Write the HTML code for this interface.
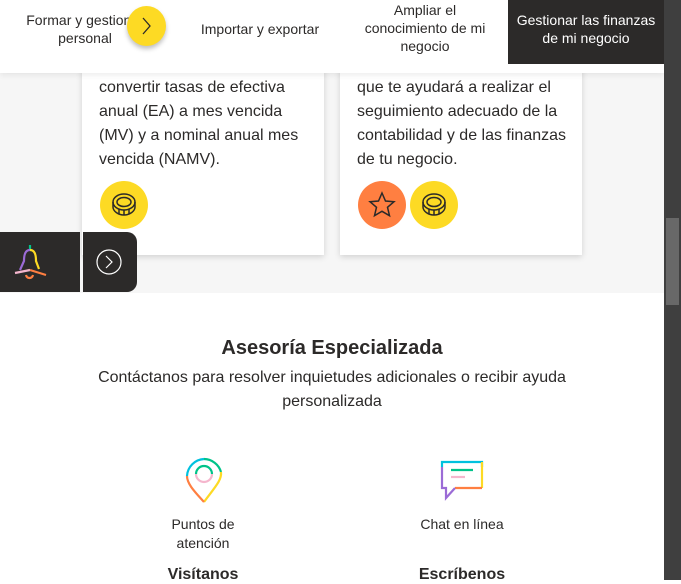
<!DOCTYPE html>
<html><head><meta charset="utf-8"><style>
*{margin:0;padding:0;box-sizing:border-box}
body{width:681px;height:580px;overflow:hidden;background:#fff;font-family:"Liberation Sans",sans-serif;color:#2c2a29;position:relative}
.gray{position:absolute;left:0;top:0;width:664px;height:293px;background:#f6f6f6}
.card{position:absolute;top:40px;width:242px;height:215px;background:#fff;box-shadow:0 2px 6px rgba(0,0,0,.15)}
.card p{position:absolute;left:17px;top:36px;font-size:16px;line-height:24px;width:215px}
.circ{position:absolute;width:48px;height:48px;border-radius:50%;top:141px;display:flex;align-items:center;justify-content:center}
.nav{position:absolute;left:0;top:0;width:664px;height:73px;background:#fff;box-shadow:0 2px 6px rgba(0,0,0,.08)}
.nav div{position:absolute;font-size:14px;line-height:18px;text-align:center}
.dark{position:absolute;left:508px;top:0;width:156px;height:64px;background:#2c2a29;color:#fff;font-size:14px;line-height:18px;text-align:center;padding-top:11px}
.sb{position:absolute;left:664px;top:0;width:17px;height:580px;background:#3f3f3f}
.th{position:absolute;left:666px;top:218px;width:13px;height:87px;background:#686868}
.t{position:absolute;width:664px;text-align:center}
</style></head><body>
<div class="gray"></div>
<div class="card" style="left:82px"><p>convertir tasas de efectiva anual (EA) a mes vencida (MV) y a nominal anual mes vencida (NAMV).</p>
<div class="circ" style="left:18px;background:#fdda24"><svg width="30" height="30" viewBox="0 0 30 30" fill="none" stroke="#2c2a29" stroke-width="1.5"><ellipse cx="15" cy="12" rx="11" ry="8"/><ellipse cx="15" cy="12" rx="7" ry="4.5"/><path d="M4 12v5c0 4 5 8 11 8s11-4 11-8v-5M10 19v5M15 20v5M20 19v5"/></svg></div></div>
<div class="card" style="left:340px"><p>que te ayudará a realizar el seguimiento adecuado de la contabilidad y de las finanzas de tu negocio.</p>
<div class="circ" style="left:18px;background:#ff7f41"><svg width="30" height="30" viewBox="0 0 30 30" fill="none" stroke="#2c2a29" stroke-width="1.5"><path d="M15 3l3.5 8 8.5.7-6.5 5.6 2 8.4L15 21.3 7.5 25.7l2-8.4L3 11.7l8.5-.7z"/></svg></div>
<div class="circ" style="left:70px;background:#fdda24"><svg width="30" height="30" viewBox="0 0 30 30" fill="none" stroke="#2c2a29" stroke-width="1.5"><ellipse cx="15" cy="12" rx="11" ry="8"/><ellipse cx="15" cy="12" rx="7" ry="4.5"/><path d="M4 12v5c0 4 5 8 11 8s11-4 11-8v-5M10 19v5M15 20v5M20 19v5"/></svg></div></div>
<div class="nav">
<div style="left:20px;top:11px;width:130px">Formar y gestionar<br>personal</div>
<div style="left:127px;top:6px;width:39px;height:40px;border-radius:50%;background:#fdda24;box-shadow:0 3px 5px rgba(0,0,0,.25)"><svg width="39" height="40"><path d="M16 12l7 8-7 8" stroke="#2c2a29" stroke-width="1.3" fill="none"/></svg></div>
<div style="left:190px;top:20px;width:140px">Importar y exportar</div>
<div style="left:350px;top:1px;width:150px">Ampliar el<br>conocimiento de mi<br>negocio</div>
</div>
<div class="dark">Gestionar las finanzas<br>de mi negocio</div>
<div style="position:absolute;left:0;top:232px;width:80px;height:60px;background:#2c2a29"><svg width="80" height="60" fill="none" stroke-width="2.2"><path d="M30 13v5" stroke="#00c389"/><path d="M30 18c-5 0-6 5-6 11l-4 9" stroke="#9b6bd6"/><path d="M30 18c5 0 6 5 6 11l3 8" stroke="#fdda24"/><path d="M15 41l15-3" stroke="#f5b6cd"/><path d="M30 38l16 5" stroke="#ff7f41"/><path d="M26 43c1 4 6 4 7 0" stroke="#ff7f41"/></svg></div>
<div style="position:absolute;left:83px;top:232px;width:54px;height:60px;background:#2c2a29;border-radius:0 10px 10px 0"><svg width="54" height="60"><circle cx="26" cy="30" r="12" stroke="#fff" stroke-width="1.2" fill="none"/><path d="M23 24l6 6-6 6" stroke="#fff" stroke-width="1.2" fill="none"/></svg></div>
<div class="t" style="top:336px;font-size:20px;font-weight:bold;line-height:24px">Asesoría Especializada</div>
<div class="t" style="top:366px;font-size:16px;line-height:24px;padding:0 90px">Contáctanos para resolver inquietudes adicionales o recibir ayuda personalizada</div>
<svg style="position:absolute;left:183px;top:456px" width="44" height="50" fill="none" stroke-width="2.2"><path d="M4 20A18 18 0 0 1 21 3" stroke="#00c1de"/><path d="M21 3A18 18 0 0 1 38 16" stroke="#00c389"/><path d="M38 16c1 8-6 15-17 30" stroke="#fdda24"/><path d="M21 46C12 36 4 28 4 20" stroke="#ff7f41"/><path d="M13 18a8 8 0 0 1 16 0" stroke="#00c389"/><path d="M29 18a8 8 0 0 1-16 0" stroke="#f5b6cd"/></svg>
<div style="position:absolute;left:160px;top:515px;width:86px;text-align:center;font-size:14px;line-height:19px">Puntos de atención</div>
<svg style="position:absolute;left:440px;top:458px" width="46" height="44" fill="none" stroke-width="2.2"><path d="M2 9V4h40v5" stroke="#00c1de"/><path d="M42 4v26" stroke="#fdda24"/><path d="M42 30H15" stroke="#ff7f41"/><path d="M15 30l-9 10V30H2V9" stroke="#9b6bd6"/><path d="M11 12h22" stroke="#00c389"/><path d="M11 19h14" stroke="#f5b6cd"/></svg>
<div style="position:absolute;left:410px;top:515px;width:104px;text-align:center;font-size:14px;line-height:19px">Chat en línea</div>
<div style="position:absolute;left:150px;top:566px;width:106px;text-align:center;font-size:16px;font-weight:bold">Visítanos</div>
<div style="position:absolute;left:410px;top:566px;width:104px;text-align:center;font-size:16px;font-weight:bold">Escríbenos</div>
<div class="sb"></div><div class="th"></div>
</body></html>
